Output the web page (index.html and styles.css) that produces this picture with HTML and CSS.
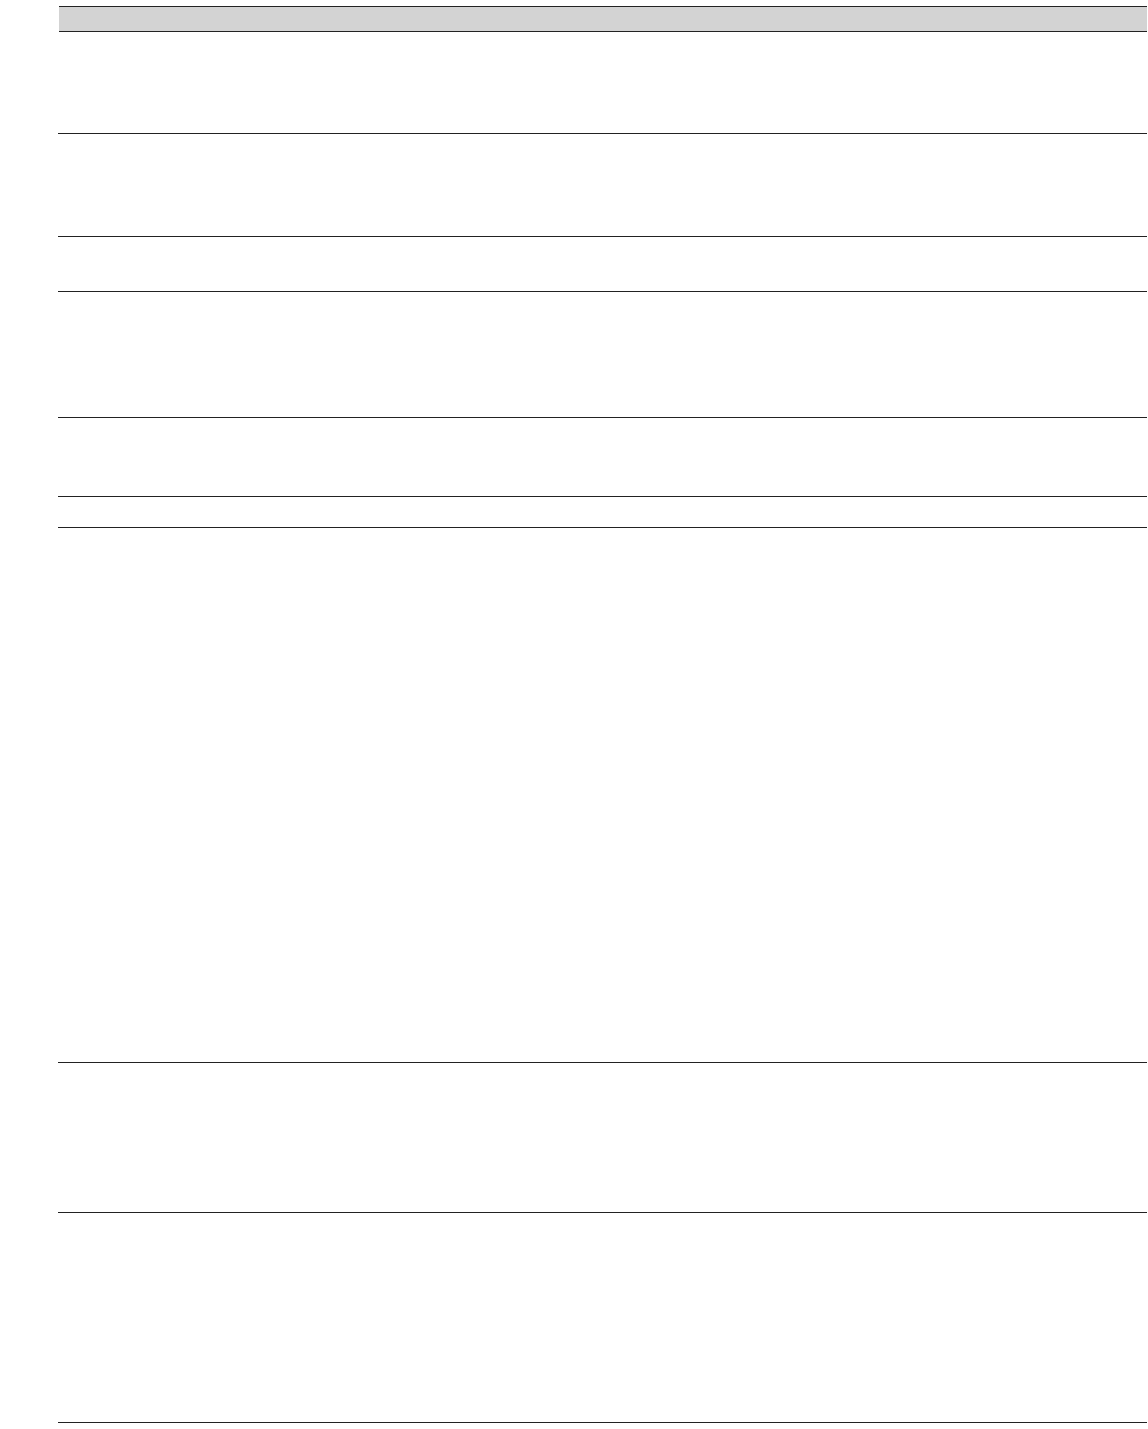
FILE: index.html
```html
<!DOCTYPE html>
<html lang="en">
<head>
<meta charset="utf-8">
<title>Table</title>
<link rel="stylesheet" href="styles.css">
</head>
<body>
<div class="table">
  <div class="head"></div>
  <div class="row r1"></div>
  <div class="row r2"></div>
  <div class="row r3"></div>
  <div class="row r4"></div>
  <div class="row r5"></div>
  <div class="row r6"></div>
  <div class="row r7"></div>
  <div class="row r8"></div>
  <div class="row r9"></div>
</div>
</body>
</html>
```
FILE: styles.css
```css
html, body {
  margin: 0;
  padding: 0;
  background: #ffffff;
  font-family: "Liberation Sans", Arial, sans-serif;
}
.table {
  padding-top: 6px;
  margin-left: 58px;
  width: 1089px;
  display: flex;
  flex-direction: column;
}
.head {
  margin-left: 1px;
  height: 24px;
  background: #d3d3d3;
  border-top: 1px solid #222222;
  border-bottom: 1px solid #222222;
}
.row {
  border-bottom: 1px solid #222222;
}
.r1 { height: 101px; }
.r2 { height: 102px; }
.r3 { height: 54px; }
.r4 { height: 125px; }
.r5 { height: 78px; }
.r6 { height: 30px; }
.r7 { height: 534px; }
.r8 { height: 149px; }
.r9 { height: 209px; }
```
